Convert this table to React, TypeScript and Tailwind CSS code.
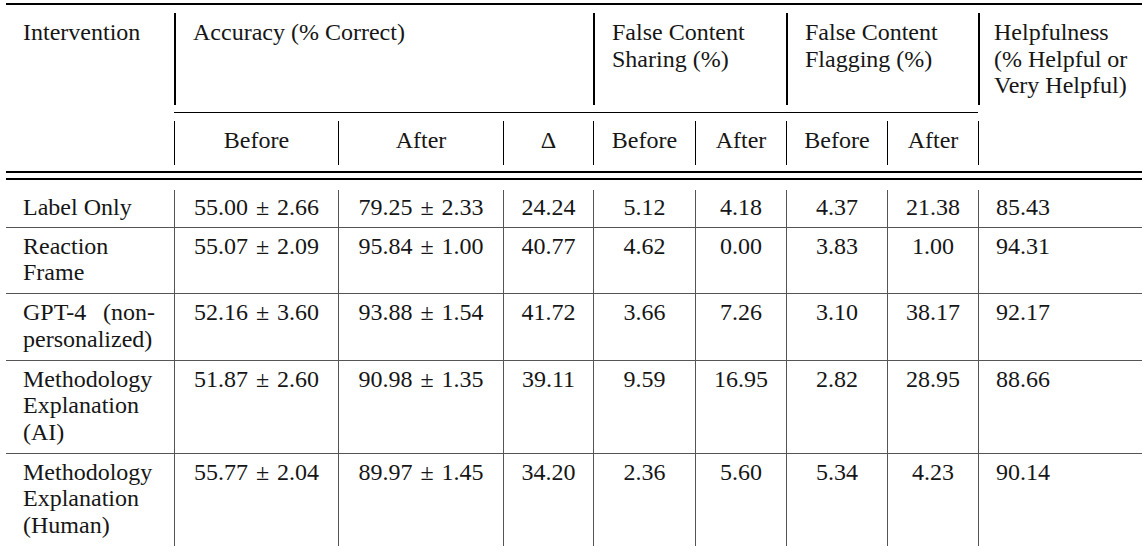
const widths = ['w-[168px]', 'w-[164px]', 'w-[165px]', 'w-[90px]', 'w-[102px]', 'w-[91px]', 'w-[101px]', 'w-[91px]', 'w-[164px]'];

const rows = [
  ['Label Only', '55.00 ± 2.66', '79.25 ± 2.33', '24.24', '5.12', '4.18', '4.37', '21.38', '85.43'],
  ['Reaction Frame', '55.07 ± 2.09', '95.84 ± 1.00', '40.77', '4.62', '0.00', '3.83', '1.00', '94.31'],
  ['GPT-4 (non-personalized)', '52.16 ± 3.60', '93.88 ± 1.54', '41.72', '3.66', '7.26', '3.10', '38.17', '92.17'],
  ['Methodology Explanation (AI)', '51.87 ± 2.60', '90.98 ± 1.35', '39.11', '9.59', '16.95', '2.82', '28.95', '88.66'],
  ['Methodology Explanation (Human)', '55.77 ± 2.04', '89.97 ± 1.45', '34.20', '2.36', '5.60', '5.34', '4.23', '90.14'],
];

const subHeads = ['Before', 'After', 'Δ', 'Before', 'After', 'Before', 'After'];

// mean ± sd, with the wider math spacing around the sign
function Value({ text }: { text: string }) {
  const parts = text.split(' ± ');
  if (parts.length < 2) return <>{text}</>;
  return (
    <>
      {parts[0]}
      <span className="mx-[8px]">±</span>
      {parts[1]}
    </>
  );
}

function TopHeader() {
  return (
    <div className="flex h-[107px]">
      <div className="w-[168px] pt-[8px]">
        <div className="pl-[17px] pt-[6px]">Intervention</div>
      </div>
      <div className="w-[419px] pt-[8px]">
        <div className="h-[92px] border-l-2 border-black pl-[17px] pt-[6px]">Accuracy (% Correct)</div>
      </div>
      <div className="w-[193px] pt-[8px]">
        <div className="h-[92px] border-l-2 border-black pl-[17px] pt-[6px]">
          False Content
          <br />
          Sharing (%)
        </div>
      </div>
      <div className="w-[192px] pt-[8px]">
        <div className="h-[92px] border-l-2 border-black pl-[17px] pt-[6px]">
          False Content
          <br />
          Flagging (%)
        </div>
      </div>
      <div className="w-[164px] pt-[8px]">
        <div className="h-[92px] whitespace-nowrap border-l-2 border-black pl-[14px] pt-[6px]">
          Helpfulness
          <br />
          (% Helpful or
          <br />
          Very Helpful)
        </div>
      </div>
    </div>
  );
}

function SubHeader() {
  return (
    <div className="flex h-[58px]">
      <div className="w-[168px]" />
      {subHeads.map((label, i) => (
        <div key={i} className={`${widths[i + 1]} pt-[8px]`}>
          <div className="h-[44px] border-l border-black pt-[6px] text-center">{label}</div>
        </div>
      ))}
      <div className="w-[164px] pt-[8px]">
        <div className="h-[44px] border-l border-black" />
      </div>
    </div>
  );
}

export default function App() {
  return (
    <div className="min-h-screen bg-white font-['Liberation_Serif',serif] text-[24px] leading-[26.7px] text-[#161616]">
      <div className="ml-[6px] w-[1136px]">
        <div className="h-[3px]" />
        <div className="h-[2px] bg-black" />
        <TopHeader />
        <div className="flex">
          <div className="w-[168px]" />
          <div className="h-[1px] w-[804px] bg-black" />
        </div>
        <SubHeader />
        <div className="h-[2px] bg-black" />
        <div className="mt-[5px] h-[2px] bg-black" />
        <div className="h-[10px]" />

        {rows.map((row, r) => (
          <div key={r} className={`flex ${r < rows.length - 1 ? 'border-b border-[#555]' : ''}`}>
            {row.map((cell, c) => {
              const pad = r === 0 ? 'pt-[4px] pb-[6px]' : 'pt-[5px] pb-[7px]';
              if (c === 0) {
                return (
                  <div key={c} className={`${widths[c]} ${pad} pl-[17px] pr-[19px] text-justify`}>
                    {cell}
                  </div>
                );
              }
              const align = c === 8 ? 'pl-[17px] text-left' : 'text-center';
              return (
                <div key={c} className={`${widths[c]} ${pad} ${align} whitespace-nowrap border-l border-[#555]`}>
                  <Value text={cell} />
                </div>
              );
            })}
          </div>
        ))}
      </div>
    </div>
  );
}
